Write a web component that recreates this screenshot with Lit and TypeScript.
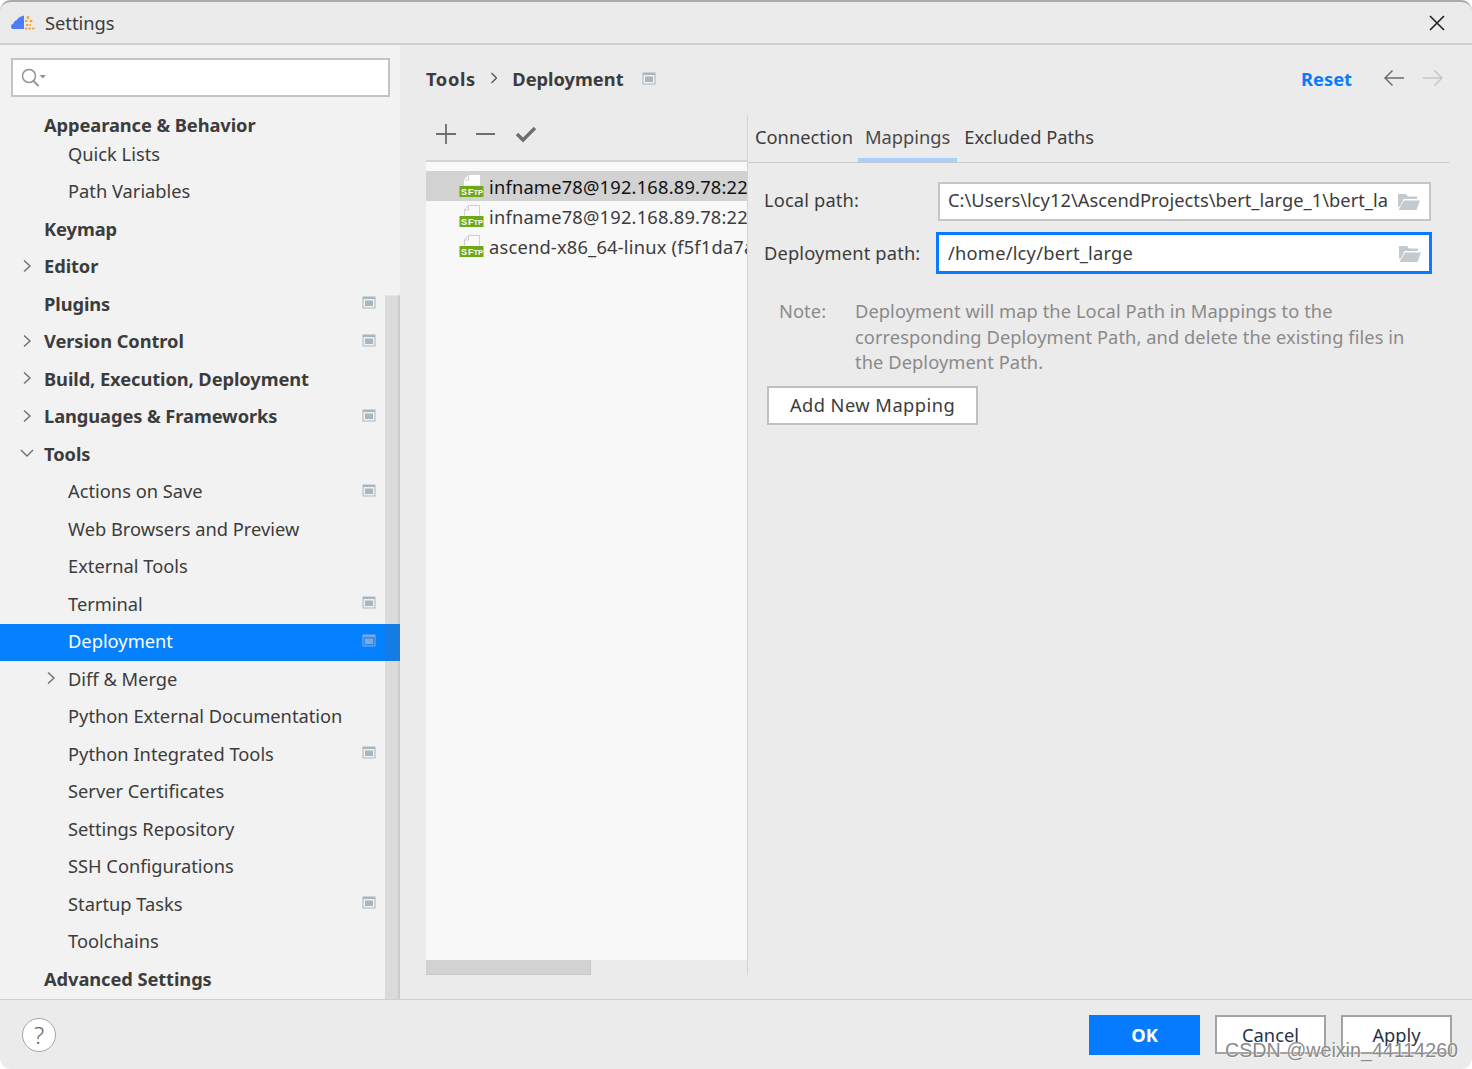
import { LitElement, html, css, svg } from "lit";
import { customElement } from "lit/decorators.js";

type Row = { t: string; lvl: number; b?: boolean; arrow?: "r" | "d"; proj?: boolean; sel?: boolean };
const rows: Row[] = [
  { t: "Quick Lists", lvl: 1 },
  { t: "Path Variables", lvl: 1 },
  { t: "Keymap", lvl: 0, b: true },
  { t: "Editor", lvl: 0, b: true, arrow: "r" },
  { t: "Plugins", lvl: 0, b: true, proj: true },
  { t: "Version Control", lvl: 0, b: true, arrow: "r", proj: true },
  { t: "Build, Execution, Deployment", lvl: 0, b: true, arrow: "r" },
  { t: "Languages & Frameworks", lvl: 0, b: true, arrow: "r", proj: true },
  { t: "Tools", lvl: 0, b: true, arrow: "d" },
  { t: "Actions on Save", lvl: 1, proj: true },
  { t: "Web Browsers and Preview", lvl: 1 },
  { t: "External Tools", lvl: 1 },
  { t: "Terminal", lvl: 1, proj: true },
  { t: "Deployment", lvl: 1, proj: true, sel: true },
  { t: "Diff & Merge", lvl: 1, arrow: "r" },
  { t: "Python External Documentation", lvl: 1 },
  { t: "Python Integrated Tools", lvl: 1, proj: true },
  { t: "Server Certificates", lvl: 1 },
  { t: "Settings Repository", lvl: 1 },
  { t: "SSH Configurations", lvl: 1 },
  { t: "Startup Tasks", lvl: 1, proj: true },
  { t: "Toolchains", lvl: 1 },
  { t: "Advanced Settings", lvl: 0, b: true },
];

const projIcon = (sel = false) => html`<svg class="proj" width="14" height="13" viewBox="0 0 14 13">
  <rect x="0.5" y="0.5" width="13" height="12" fill="${sel ? "#7fa9d6" : "#aab6bd"}"></rect>
  <rect x="1.500" y="3" width="11" height="8.500" fill="${sel ? "#1f8cf8" : "#eef1f2"}"></rect>
  <rect x="3" y="4.500" width="8" height="5.500" fill="${sel ? "#7fa9d6" : "#aab6bd"}"></rect>
</svg>`;

const folder = html`<svg class="folder" width="24" height="18" viewBox="0 0 24 18">
  <path d="M1 1h8l2 2.500h9V6H6.500L3 13.500H1z" fill="#c3cacf"></path>
  <path d="M7 7.500h16L19.500 17H1.500z" fill="#c3cacf"></path>
</svg>`;

const sftp = (sel: boolean) => html`<svg class="sftp" width="25" height="24" viewBox="0 0 25 24">
  <path d="M5.500 11.500V5.500l4-4h11v10" fill="${sel ? "#fff" : "#fafafa"}" stroke="${sel ? "#fff" : "#cfcfcf"}"></path>
  <path d="M5.500 6h4V1.500" fill="none" stroke="#cfcfcf"></path>
  <rect x="0.5" y="12" width="24" height="11" fill="#6eaa18"></rect>
  <text x="2" y="21" class="sf">SF</text><text x="14.500" y="21" class="tp">TP</text>
</svg>`;

@customElement("app-root")
export class AppRoot extends LitElement {
  static styles = css`
    :host { display: block; width: 1472px; height: 1069px; background: #fff; font-family: "Noto Sans", "Open Sans", sans-serif; color: #3c3c3c; font-size: 18.3px; position: relative; overflow: hidden; }
    .win { width: 1472px; height: 1069px; display: flex; flex-direction: column; background: #ebebeb; border-radius: 11px; border-top: 2px solid #ababab; box-sizing: border-box; overflow: hidden; }
    .title { height: 43px; flex: none; display: flex; align-items: center; box-sizing: border-box; border-bottom: 2px solid #d0d0d0; padding: 0 27px 0 11px; gap: 9px; }
    .title span { flex: 1; }
    .body { flex: 1; display: flex; min-height: 0; }
    .side { width: 400px; flex: none; background: #f2f2f2; position: relative; display: flex; flex-direction: column; }
    .search { margin: 13px 10px 0 11px; height: 39px; box-sizing: border-box; background: #fff; border: 2px solid #c4c4c4; display: flex; align-items: center; padding-left: 8px; flex: none; }
    .tree { margin-top: 19.25px; display: flex; flex-direction: column; position: relative; z-index: 1; }
    .row { height: 37.5px; display: flex; align-items: center; position: relative; flex: none; white-space: nowrap; box-sizing: border-box; padding-bottom: 4px; }
    .row.first { height: 20px; }
    .row.l0 { padding-left: 44px; }
    .row.l1 { padding-left: 68px; }
    .row.b { font-weight: 700; letter-spacing: -0.08px; }
    .row.sel { background: #0580ff; color: #fff; }
    .arrow { position: absolute; top: 50%; margin-top: -10px; }
    .row.l0 .arrow { left: 19px; }
    .row.l1 .arrow { left: 43px; }
    .proj { position: absolute; left: 362px; top: 10px; }
    .thumb { position: absolute; z-index: 2; left: 385px; top: 250px; bottom: 0; width: 15px; box-sizing: border-box; background: rgba(100,100,100,.17); border-right: 2px solid rgba(100,100,100,.12); border-top: 1px solid rgba(255,255,255,.3); }
    .main { flex: 1; display: flex; flex-direction: column; padding-left: 26px; min-width: 0; }
    .crumbs { height: 70px; flex: none; display: flex; align-items: center; font-weight: 700; box-sizing: border-box; padding-bottom: 4px; }
    .crumbs .t { letter-spacing: 0.6px; }
    .crumbs .sep { margin: 0 15px 0 15.5px; display: flex; }
    .crumbs .pi { margin-left: 18px; display: flex; }
    .crumbs .reset { margin-left: auto; color: #0a7bff; margin-right: 31px; }
    .crumbs .navs { display: flex; gap: 17px; margin-right: 28px; }
    .split { height: 860px; flex: none; display: flex; }
    .left { width: 321px; flex: none; display: flex; flex-direction: column; }
    .tools { height: 47px; flex: none; display: flex; align-items: center; box-sizing: border-box; padding: 0 0 8px 9px; gap: 19px; border-bottom: 2px solid #d4d4d4; }
    .tools svg { flex: none; }
    .list { flex: 1; background: #f8f8f8; padding-top: 9px; overflow: hidden; min-height: 0; }
    .item { height: 30px; display: flex; align-items: center; white-space: nowrap; padding-left: 33px; gap: 5px; overflow: hidden; }
    .item span { letter-spacing: 0.2px; }
    .sftp { flex: none; }
    .item.on { background: #d2d2d2; color: #111; }
    .sf { font: 700 9px "Liberation Sans", sans-serif; letter-spacing: 1px; fill: #fff; }
    .tp { font: 700 7.5px "Liberation Sans", sans-serif; fill: #fff; }
    .sb { height: 15px; flex: none; background: #ebebeb; }
    .sb div { width: 165px; height: 15px; background: #d2d2d2; box-sizing: border-box; border: 1px solid #c8c8c8; border-top: 0; border-left: 0; }
    .right { width: 702px; box-sizing: border-box; flex: none; border-left: 1px solid #d4d4d4; display: flex; flex-direction: column; }
    .tabs { height: 48px; flex: none; display: flex; border-bottom: 1px solid #c8c8c8; box-sizing: border-box; }
    .tab { padding: 0 5px 4px 7px; display: flex; align-items: center; position: relative; height: 47px; box-sizing: border-box; }
    .tab.on { color: #4a4a4a; padding-right: 7px; }
    .tab.on::after { content: ""; position: absolute; left: 0; right: 0; bottom: 0; height: 4px; background: #a6d0ff; }
    .form { display: grid; grid-template-columns: 172px minmax(0, 1fr); padding: 19px 18px 0 16px; row-gap: 11px; align-items: center; }
    .lab { white-space: nowrap; padding-bottom: 4px; letter-spacing: 0.15px; }
    .lab.d { padding-bottom: 1px; }
    .inp { height: 39px; background: #fff; border: 2px solid #c6c6c6; box-sizing: border-box; display: flex; align-items: center; padding: 0 8px 4px 8px; margin-left: 2px; white-space: nowrap; min-width: 0; }
    .inp.focus { height: 42px; border: 3px solid #0a7bff; margin-left: 0; margin-right: -1px; padding-left: 9px; padding-right: 7px; padding-bottom: 2px; }
    .inp.focus .v { letter-spacing: 0.22px; }
    .inp .v { flex: 1; overflow: hidden; min-width: 0; letter-spacing: 0.03px; }
    .folder { flex: none; margin-left: 8px; margin-top: 4px; }
    .note { display: flex; padding: 24px 30px 0 31px; color: #8a8a8a; line-height: 25.5px; letter-spacing: 0.07px; }
    .note .k { width: 76px; flex: none; }
    .add { margin: 11px 0 0 19px; width: 211px; height: 39px; box-sizing: border-box; border: 2px solid #c0c0c0; background: #fff; display: flex; align-items: center; justify-content: center; color: #3c3c3c; padding-bottom: 2px; letter-spacing: 0.45px; }
    .foot { height: 70px; flex: none; border-top: 1px solid #d0d0d0; box-sizing: border-box; display: flex; align-items: center; padding: 0 20px 0 22px; gap: 15px; }
    .help { width: 34px; height: 34px; border-radius: 50%; box-sizing: border-box; border: 1.5px solid #a5a5a5; background: #fff; display: flex; align-items: center; justify-content: center; color: #6a6a6a; margin-right: auto; font-size: 24px; font-family: "Noto Sans", sans-serif; font-weight: 300; }
    .btn { width: 111px; height: 39px; box-sizing: border-box; border: 2px solid #a3a3a3; background: #fff; display: flex; align-items: center; justify-content: center; color: #26324a; }
    .btn.ok { background: #077bff; border: 0; height: 40px; color: #fff; font-weight: 700; }
    .wm { position: absolute; left: 1225px; top: 1038px; font: 19.7px/24px "Liberation Sans", sans-serif; color: #8a8a8a; text-shadow: 0 0 1px #fff, 1px 1px 0 rgba(255,255,255,.6); white-space: nowrap; }
  `;

  render() {
    const chevR = html`<svg class="arrow" width="16" height="16" viewBox="0 0 16 16"><path d="M5 2.500l6 5.500-6 5.500" fill="none" stroke="#6e6e6e" stroke-width="1.4"></path></svg>`;
    const chevD = html`<svg class="arrow" width="16" height="16" viewBox="0 0 16 16"><path d="M2 5l6 6 6-6" fill="none" stroke="#6e6e6e" stroke-width="1.4"></path></svg>`;
    return html`<div class="win">
      <div class="title">
        <svg width="25" height="16" viewBox="0 0 25 16">
          <path d="M0 11.500Q0 9 2.500 8.500 3 5.500 6 5 7 2 10 1.500L13 .5V14H2Q0 14 0 11.500z" fill="#4f7dfa"></path>
          <path d="M14 6h3M15 10h5M14 13.500h10" stroke="#f6a344" stroke-width="1.800" fill="none" stroke-dasharray="2.500 1"></path>
          <circle cx="17" cy="2.500" r="1.500" fill="#f6a344"></circle>
          <circle cx="20" cy="6" r="1.500" fill="#f6a344"></circle>
        </svg>
        <span>Settings</span>
        <svg width="16" height="16" viewBox="0 0 16 16"><path d="M1 1l14 14M15 1L1 15" stroke="#222" stroke-width="1.6"></path></svg>
      </div>
      <div class="body">
        <div class="side">
          <div class="search">
            <svg width="26" height="20" viewBox="0 0 26 20">
              <circle cx="8" cy="8" r="6.500" fill="none" stroke="#8a949b" stroke-width="1.5"></circle>
              <path d="M12.500 13l5 5" stroke="#8a949b" stroke-width="1.8"></path>
              <path d="M18.500 7h6.500l-3.250 3.500z" fill="#8a949b"></path>
            </svg>
          </div>
          <div class="tree">
            <div class="row first l0 b">Appearance &amp; Behavior</div>
            ${rows.map((r) => html`<div class="row l${r.lvl} ${r.b ? "b" : ""} ${r.sel ? "sel" : ""}">
              ${r.arrow === "r" ? chevR : r.arrow === "d" ? chevD : ""}
              ${r.t}${r.proj ? projIcon(r.sel) : ""}
            </div>`)}
          </div>
          <div class="thumb"></div>
        </div>
        <div class="main">
          <div class="crumbs">
            <span class="t">Tools</span>
            <span class="sep"><svg width="6" height="12" viewBox="0 0 6 12"><path d="M0.500 1l5 5-5 5" fill="none" stroke="#555" stroke-width="1.4"></path></svg></span>
            <span>Deployment</span>
            <span class="pi">${svg`<svg width="14" height="13" viewBox="0 0 14 13"><rect x="0.5" y="0.5" width="13" height="12" fill="#aab6bd"></rect><rect x="1.500" y="3" width="11" height="8.500" fill="#eef1f2"></rect><rect x="3" y="4.500" width="8" height="5.500" fill="#aab6bd"></rect></svg>`}</span>
            <span class="reset">Reset</span>
            <span class="navs">
              <svg width="22" height="18" viewBox="0 0 22 18"><path d="M21 9H2M9.500 1.500L2 9l7.500 7.500" fill="none" stroke="#6e6e6e" stroke-width="1.5"></path></svg>
              <svg width="22" height="18" viewBox="0 0 22 18"><path d="M1 9h19M12.500 1.500L20 9l-7.500 7.500" fill="none" stroke="#c6c6c6" stroke-width="1.5"></path></svg>
            </span>
          </div>
          <div class="split">
            <div class="left">
              <div class="tools">
                <svg width="22" height="22" viewBox="0 0 22 22"><path d="M11 1v20M1 11h20" stroke="#6e6e6e" stroke-width="1.8"></path></svg>
                <svg width="20" height="22" viewBox="0 0 20 22"><path d="M0 11h19" stroke="#6e6e6e" stroke-width="1.8"></path></svg>
                <svg width="22" height="22" viewBox="0 0 22 22"><path d="M2 11l6 6L20 5" fill="none" stroke="#6e6e6e" stroke-width="3.400"></path></svg>
              </div>
              <div class="list">
                <div class="item on">${sftp(true)}<span>infname78@192.168.89.78:22</span></div>
                <div class="item">${sftp(false)}<span>infname78@192.168.89.78:22</span></div>
                <div class="item">${sftp(false)}<span>ascend-x86_64-linux (f5f1da7a</span></div>
              </div>
              <div class="sb"><div></div></div>
            </div>
            <div class="right">
              <div class="tabs">
                <div class="tab">Connection</div>
                <div class="tab on">Mappings</div>
                <div class="tab">Excluded Paths</div>
              </div>
              <div class="form">
                <div class="lab">Local path:</div>
                <div class="inp"><span class="v">C:\\Users\\lcy12\\AscendProjects\\bert_large_1\\bert_la</span>${folder}</div>
                <div class="lab d">Deployment path:</div>
                <div class="inp focus"><span class="v">/home/lcy/bert_large</span>${folder}</div>
              </div>
              <div class="note">
                <div class="k">Note:</div>
                <div>Deployment will map the Local Path in Mappings to the corresponding Deployment Path, and delete the existing files in the Deployment Path.</div>
              </div>
              <div class="add">Add New Mapping</div>
            </div>
          </div>
        </div>
      </div>
      <div class="foot">
        <div class="help">?</div>
        <div class="btn ok">OK</div>
        <div class="btn">Cancel</div>
        <div class="btn">Apply</div>
      </div>
    </div>
    <div class="wm">CSDN @weixin_44114260</div>`;
  }
}
